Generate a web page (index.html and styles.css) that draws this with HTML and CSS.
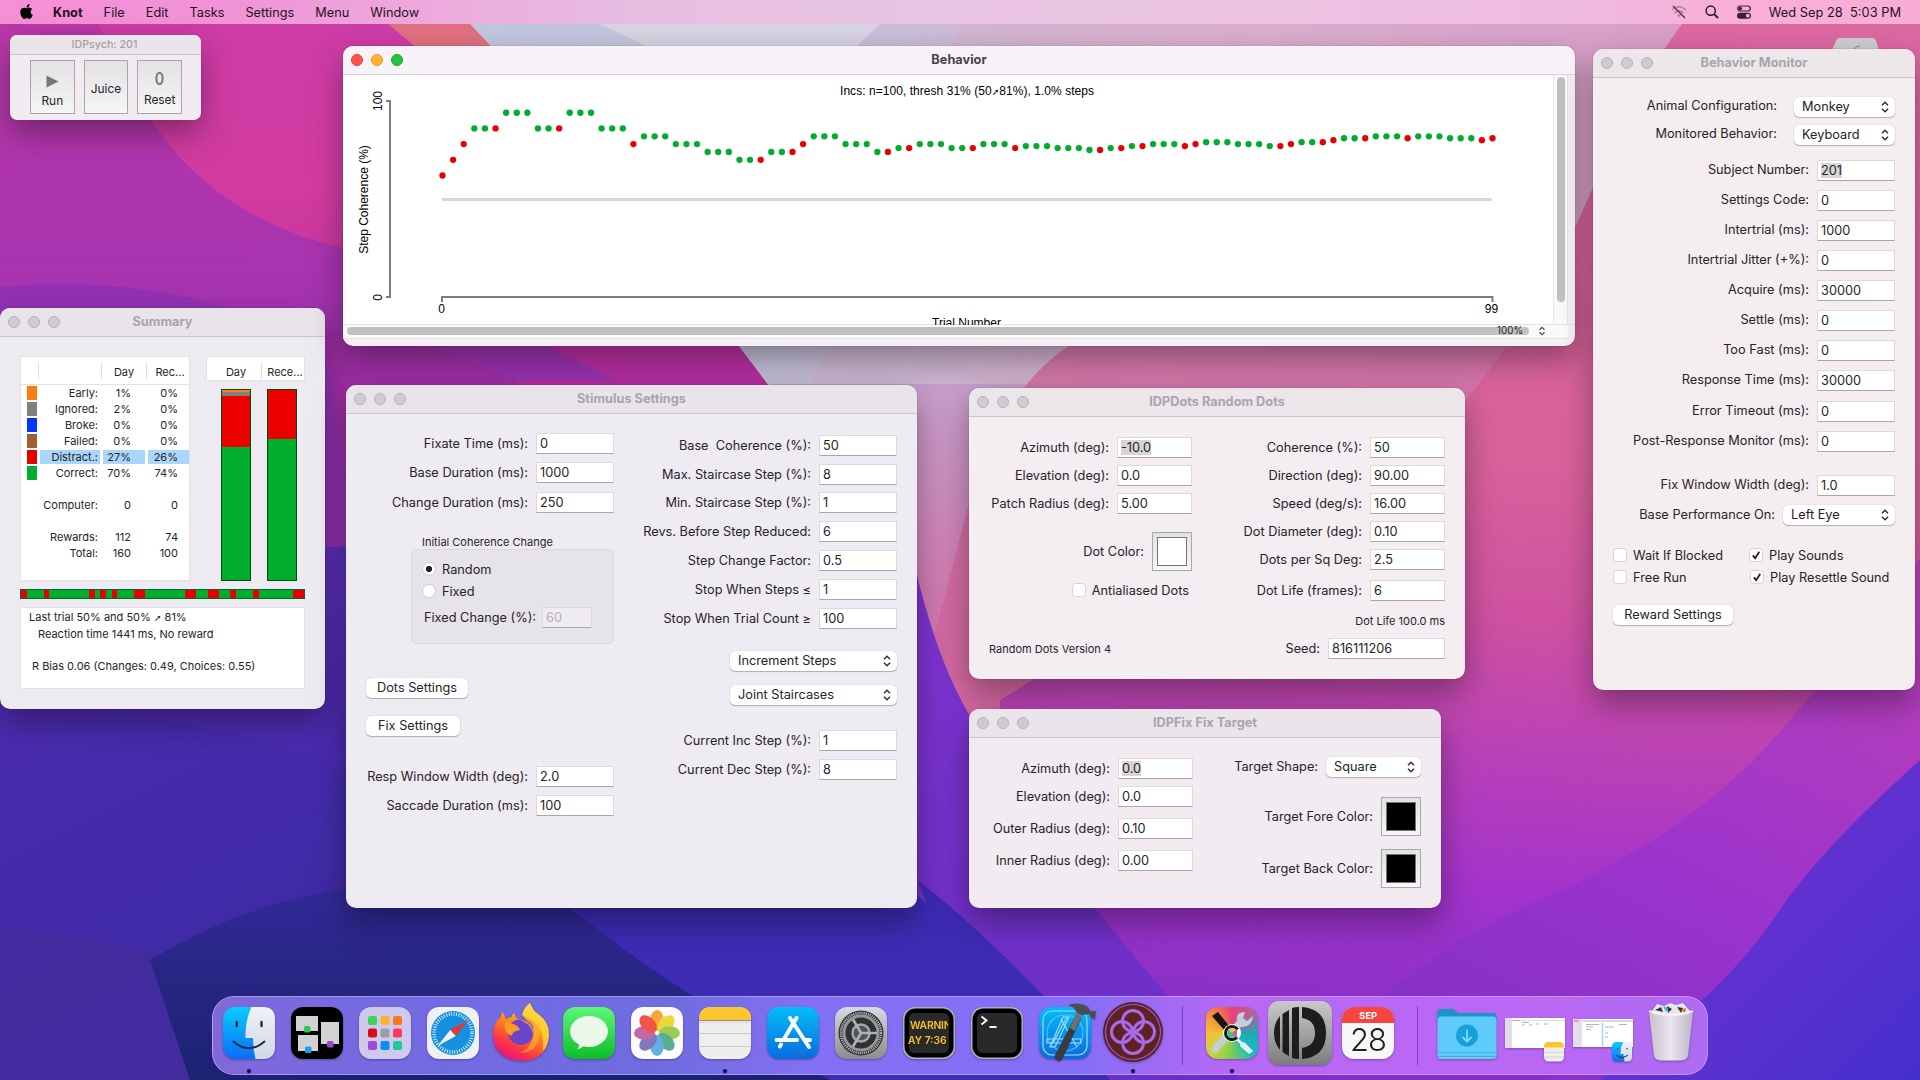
FILE: index.html
```html
<!DOCTYPE html>
<html lang="en">
<head>
<meta charset="utf-8">
<title>Knot</title>
<link rel="stylesheet" href="styles.css">
</head>
<body>
<svg class="wallpaper" viewBox="0 0 1920 1080" preserveAspectRatio="none" aria-hidden="true">
  <defs>
    <linearGradient id="w-base" x1="0" y1="0" x2="0" y2="1"><stop offset="0" stop-color="#bd38a8"/><stop offset=".28" stop-color="#a533b0"/><stop offset=".55" stop-color="#7a2fb4"/><stop offset="1" stop-color="#33288f"/></linearGradient>
    <linearGradient id="w-pink" x1="0" y1="0" x2="0" y2="1"><stop offset="0" stop-color="#cd3ca8"/><stop offset=".45" stop-color="#d23b9f"/><stop offset="1" stop-color="#b02ca4"/></linearGradient>
    <linearGradient id="w-lav" x1="0" y1="0" x2="1" y2="0"><stop offset="0" stop-color="#bfc7df"/><stop offset=".35" stop-color="#c9bdd8"/><stop offset=".6" stop-color="#dcb0cf"/><stop offset="1" stop-color="#d89cc8"/></linearGradient>
    <linearGradient id="w-rose" gradientUnits="userSpaceOnUse" x1="1500" y1="0" x2="1420" y2="1080"><stop offset="0" stop-color="#dc68a2"/><stop offset=".42" stop-color="#d8629a"/><stop offset=".56" stop-color="#d052a0"/><stop offset=".7" stop-color="#b840b8"/><stop offset=".82" stop-color="#a333cc"/><stop offset="1" stop-color="#7c2fc4"/></linearGradient>
    <linearGradient id="w-rosel" x1="0" y1="0" x2="0" y2="1"><stop offset="0" stop-color="#c8a0cc"/><stop offset=".5" stop-color="#d27cb2"/><stop offset="1" stop-color="#d8649f"/></linearGradient>
    <linearGradient id="w-blue" x1="0" y1="0" x2="0" y2="1"><stop offset="0" stop-color="#5f30bd"/><stop offset=".5" stop-color="#4429ac"/><stop offset="1" stop-color="#302890"/></linearGradient>
    <linearGradient id="w-deep" x1="0" y1="0" x2="1" y2="1"><stop offset="0" stop-color="#4a2cb0"/><stop offset="1" stop-color="#33289a"/></linearGradient>
    <linearGradient id="w-navy" x1="0" y1="0" x2="0" y2="1"><stop offset="0" stop-color="#322a9a"/><stop offset=".5" stop-color="#272683"/><stop offset="1" stop-color="#1c2272"/></linearGradient>
    <linearGradient id="w-vio" x1="0" y1="0" x2="0" y2="1"><stop offset="0" stop-color="#8034d2"/><stop offset="1" stop-color="#6a2fc6"/></linearGradient>
    <linearGradient id="w-right" x1="1" y1="0" x2="0" y2="1"><stop offset="0" stop-color="#b53dbd"/><stop offset=".5" stop-color="#9833ce"/><stop offset="1" stop-color="#7b2fc6"/></linearGradient>
    <linearGradient id="w-br" x1="0" y1="0" x2="1" y2="1"><stop offset="0" stop-color="#7c32d4"/><stop offset="1" stop-color="#4530cc"/></linearGradient>
  </defs>
  <rect width="1920" height="1080" fill="url(#w-base)"/>
  <path d="M98 24Q130 90 165 140Q230 222 343 248L700 420L1000 400V0H98Z" fill="url(#w-pink)"/>
  <path d="M0 287Q120 276 230 308Q300 335 346 400V560L0 540Z" fill="#9331b4"/>
  <path d="M325 330Q420 335 515 382L640 480H346Z" fill="#a02fa6"/>
  <path d="M515 380H770L800 500H560Z" fill="#b42f9d"/>
  <path d="M388 24H475L765 375L745 350Q600 200 388 24Z" fill="#e0707f"/>
  <path d="M470 24H1700V430H795L772 390Q600 160 470 24Z" fill="url(#w-lav)"/>
  <path d="M600 24L880 24Q820 80 800 120Z" fill="#d8d3e2"/>
  <path d="M960 24H1250L1100 420H795Z" fill="#dca9c6" opacity=".3"/>
  <path d="M770 384H1350L1300 800L1000 770L960 725Q860 620 770 384Z" fill="url(#w-rosel)"/>
  <path d="M1078 340Q1010 380 975 480L910 730L1000 780H1600V330Z" fill="#d4669f" opacity=".75"/>
  <path d="M1682 24Q1640 80 1600 170Q1540 320 1440 430L1000 700V1080H1920V0H1682Z" fill="url(#w-rose)"/>
  <path d="M0 560Q180 560 346 546L917 610V1080H0Z" fill="url(#w-blue)"/>
  <path d="M0 735Q150 690 346 770L560 908L700 1080H0Z" fill="url(#w-deep)"/>
  <path d="M0 928Q140 935 260 1000L330 1080H0Z" fill="#442c9c" opacity=".8"/>
  <path d="M150 960Q330 850 555 895Q650 960 830 1080H190Z" fill="url(#w-navy)"/>
  <path d="M555 895L917 890L1060 1080H830Q640 970 555 895Z" fill="#3d2bb4"/>
  <path d="M917 575Q945 690 990 745L1095 908Q1140 965 1240 1080H1040Q980 950 917 895Z" fill="url(#w-vio)"/>
  <path d="M917 880Q970 920 1044 996L1110 1080H1000Z" fill="#3d2bb4"/>
  <path d="M1920 558Q1860 640 1790 720Q1700 830 1540 900Q1400 960 1300 1080H1920Z" fill="url(#w-right)" opacity=".8"/>
  <path d="M1920 760Q1820 850 1780 910Q1720 1000 1600 1080H1920Z" fill="url(#w-br)"/>
  <path d="M1832 50l4-9q1-3 4-3h32q3 0 4 3l3 9z" fill="#cfcccf"/>
  <path d="M1854 50q1-4 6-4" fill="none" stroke="#8d8a8d"/>
</svg>

<nav class="menubar">
  <svg class="apple" viewBox="0 0 384 512"><path d="M318.7 268.7c-.2-36.7 16.4-64.4 50-84.8-18.8-26.9-47.2-41.7-84.7-44.6-35.5-2.8-74.3 20.7-88.5 20.7-15 0-49.4-19.7-76.4-19.7C63.3 141.2 4 184.8 4 273.5q0 39.3 14.4 81.2c12.8 36.7 59 126.7 107.2 125.2 25.2-.6 43-17.9 75.8-17.9 31.8 0 48.3 17.9 76.4 17.9 48.6-.7 90.4-82.5 102.6-119.3-65.2-30.7-61.7-90-61.7-91.9zm-56.6-164.2c27.3-32.4 24.8-61.9 24-72.5-24.1 1.4-52 16.4-67.9 34.9-17.5 19.8-27.8 44.3-25.6 71.9 26.1 2 49.9-11.4 69.5-34.3z"/></svg>
  <span class="menu app">Knot</span><span class="menu">File</span><span class="menu">Edit</span><span class="menu">Tasks</span><span class="menu">Settings</span><span class="menu">Menu</span><span class="menu">Window</span>
  <div class="status">
    <svg width="16" height="14" viewBox="0 0 16 14" fill="none"><g stroke="#b586a5" stroke-width="1.700"><path d="M1 5Q8-1.500 15 5M3.500 8Q8 4 12.500 8"/></g><path d="M8 12.500L5.800 10Q8 8.300 10.200 10Z" fill="#b586a5"/><path d="M2 1L14 13" stroke="#4b2b40" stroke-width="1.200"/></svg>
    <svg width="14" height="14" viewBox="0 0 14 14" fill="none" stroke="#2b1624" stroke-width="1.500"><circle cx="5.700" cy="5.700" r="4.600"/><path d="M9.200 9.200L13 13" stroke-width="1.900"/></svg>
    <svg width="14" height="14" viewBox="0 0 14 14"><rect x=".7" y="1" width="12.600" height="5" rx="2.500" fill="none" stroke="#3a2030" stroke-width="1.200"/><circle cx="3.300" cy="3.500" r="1.800" fill="#3a2030"/><rect x="0" y="7.700" width="14" height="6" rx="3" fill="#3a2030"/><circle cx="10.800" cy="10.700" r="1.900" fill="#f3aed6"/></svg>
    <span class="clock">Wed Sep 28&nbsp; 5:03 PM</span>
  </div>
</nav>

<section class="window psych">
  <header class="minibar">IDPsych: 201</header>
  <div class="tools">
    <div class="tool"><svg width="13" height="13" viewBox="0 0 13 13"><path d="M.5.5L12.500 6.500L.5 12.500Z" fill="#777"/></svg><span>Run</span></div>
    <div class="tool"><span>Juice</span></div>
    <div class="tool"><b>0</b><span>Reset</span></div>
  </div>
</section>

<section class="window summary">
  <header class="titlebar"><i></i><i></i><i></i><h1>Summary</h1></header>
  <div class="summary-body">
    <div class="tables">
      <div class="counts">
        <div class="crow chead"><span></span><span></span><span>Day</span><span>Rec...</span></div>
        <div class="crow"><em class="c-early"></em><span>Early:</span><span>1%</span><span>0%</span></div>
        <div class="crow"><em class="c-ignored"></em><span>Ignored:</span><span>2%</span><span>0%</span></div>
        <div class="crow"><em class="c-broke"></em><span>Broke:</span><span>0%</span><span>0%</span></div>
        <div class="crow"><em class="c-failed"></em><span>Failed:</span><span>0%</span><span>0%</span></div>
        <div class="crow hl"><em class="c-wrong"></em><span>Distract.:</span><span>27%</span><span>26%</span></div>
        <div class="crow"><em class="c-correct"></em><span>Correct:</span><span>70%</span><span>74%</span></div>
        <div class="crow"></div>
        <div class="crow"><em></em><span>Computer:</span><span>0</span><span>0</span></div>
        <div class="crow"></div>
        <div class="crow"><em></em><span>Rewards:</span><span>112</span><span>74</span></div>
        <div class="crow"><em></em><span>Total:</span><span>160</span><span>100</span></div>
      </div>
      <div class="bars">
        <div class="barhead"><span>Day</span><span>Rece...</span></div>
        <div class="barset">
          <div class="bar"><div class="c-early" style="height:1%"></div><div class="c-ignored" style="height:2%"></div><div class="c-wrong" style="height:27%"></div></div>
          <div class="bar"><div class="c-wrong" style="height:26%"></div></div>
        </div>
      </div>
    </div>
    <div class="strip" id="strip"></div>
    <div class="report"><p>Last trial 50% and 50% <small>➚</small> 81%</p><p class="in2">Reaction time 1441 ms, No reward</p><p>&nbsp;</p><p class="in1">R Bias 0.06 (Changes: 0.49, Choices: 0.55)</p></div>
  </div>
</section>

<section class="window behavior active">
  <header class="titlebar"><i></i><i></i><i></i><h1>Behavior</h1></header>
  <div class="plot-area">
    <svg class="plot" id="plot" width="1210" height="250" viewBox="343 75 1210 250">
      <g stroke="#7d7d7d" stroke-width="2" fill="none"><path d="M386 101H390V297H386"/><path d="M442 302V297H1492.500V302"/></g>
      <path d="M442 199.500H1491.500" stroke="#d6d6d6" stroke-width="3"/>
      <g class="plot-text">
        <text x="967" y="95" text-anchor="middle" textLength="254">Incs: n=100, thresh 31% (50<tspan class="dingbat">➚</tspan>81%), 1.0% steps</text>
        <text x="441.500" y="313" text-anchor="middle">0</text>
        <text x="1491.500" y="313" text-anchor="middle">99</text>
        <text x="966.500" y="327" text-anchor="middle">Trial Number</text>
        <text transform="translate(368 199.500) rotate(-90)" text-anchor="middle">Step Coherence (%)</text>
        <text transform="translate(382 101) rotate(-90)" text-anchor="middle">100</text>
        <text transform="translate(382 297.500) rotate(-90)" text-anchor="middle">0</text>
      </g>
    </svg>
    <div class="vscroll"><div class="vthumb"></div></div>
  </div>
  <div class="hscroll"><div class="hthumb">100%</div><svg width="8" height="10" viewBox="0 0 8 10" fill="none" stroke="#444" stroke-width="1.200"><path d="M1.500 3.800L4 1.300L6.500 3.800M1.500 6.200L4 8.700L6.500 6.200"/></svg></div>
</section>

<section class="window stimulus">
  <header class="titlebar"><i></i><i></i><i></i><h1>Stimulus Settings</h1></header>
  <div class="columns">
    <div class="col stim-left">
      <div class="row">Fixate Time (ms):<div class="input">0</div></div>
      <div class="row mt8">Base Duration (ms):<div class="input">1000</div></div>
      <div class="row mt9">Change Duration (ms):<div class="input">250</div></div>
      <div class="grouplabel">Initial Coherence Change</div>
      <div class="group">
        <div class="radio on"><i></i>Random</div>
        <div class="radio"><i></i>Fixed</div>
        <div class="grow">Fixed Change (%):<div class="input off">60</div></div>
      </div>
      <div class="button dots">Dots Settings</div>
      <div class="button fix">Fix Settings</div>
      <div class="row mt29">Resp Window Width (deg):<div class="input">2.0</div></div>
      <div class="row mt8">Saccade Duration (ms):<div class="input">100</div></div>
    </div>
    <div class="col stim-right">
      <div class="row">Base&nbsp; Coherence (%):<div class="input">50</div></div>
      <div class="row mt8">Max. Staircase Step (%):<div class="input">8</div></div>
      <div class="row mt7">Min. Staircase Step (%):<div class="input">1</div></div>
      <div class="row mt8">Revs. Before Step Reduced:<div class="input">6</div></div>
      <div class="row mt8">Step Change Factor:<div class="input">0.5</div></div>
      <div class="row mt8">Stop When Steps ≤<div class="input">1</div></div>
      <div class="row mt8">Stop When Trial Count ≥<div class="input">100</div></div>
      <div class="popup wide mt22">Increment Steps<svg viewBox="0 0 8 12"><path d="M1 4.200L4 1.200L7 4.200M1 7.800L4 10.800L7 7.800"/></svg></div>
      <div class="popup wide mt13">Joint Staircases<svg viewBox="0 0 8 12"><path d="M1 4.200L4 1.200L7 4.200M1 7.800L4 10.800L7 7.800"/></svg></div>
      <div class="row mt24">Current Inc Step (%):<div class="input">1</div></div>
      <div class="row mt8">Current Dec Step (%):<div class="input">8</div></div>
    </div>
  </div>
</section>

<section class="window dotswin">
  <header class="titlebar"><i></i><i></i><i></i><h1>IDPDots Random Dots</h1></header>
  <div class="columns">
    <div class="col dots-left">
      <div class="row">Azimuth (deg):<div class="input"><mark>-10.0</mark></div></div>
      <div class="row mt7">Elevation (deg):<div class="input">0.0</div></div>
      <div class="row mt7">Patch Radius (deg):<div class="input">5.00</div></div>
      <div class="row wellrow mt18">Dot Color:<div class="well"><div></div></div></div>
      <div class="check anti"><i></i>Antialiased Dots</div>
      <div class="version">Random Dots Version 4</div>
    </div>
    <div class="col dots-right">
      <div class="row">Coherence (%):<div class="input">50</div></div>
      <div class="row mt7">Direction (deg):<div class="input">90.00</div></div>
      <div class="row mt7">Speed (deg/s):<div class="input">16.00</div></div>
      <div class="row mt7">Dot Diameter (deg):<div class="input">0.10</div></div>
      <div class="row mt7">Dots per Sq Deg:<div class="input">2.5</div></div>
      <div class="row mt10">Dot Life (frames):<div class="input">6</div></div>
      <div class="life">Dot Life 100.0 ms</div>
      <div class="row seed">Seed:<div class="input">816111206</div></div>
    </div>
  </div>
</section>

<section class="window fixwin">
  <header class="titlebar"><i></i><i></i><i></i><h1>IDPFix Fix Target</h1></header>
  <div class="columns">
    <div class="col fix-left">
      <div class="row">Azimuth (deg):<div class="input"><mark>0.0</mark></div></div>
      <div class="row mt7">Elevation (deg):<div class="input">0.0</div></div>
      <div class="row mt11">Outer Radius (deg):<div class="input">0.10</div></div>
      <div class="row mt11">Inner Radius (deg):<div class="input">0.00</div></div>
    </div>
    <div class="col fix-right">
      <div class="row">Target Shape:<div class="popup shape">Square<svg viewBox="0 0 8 12"><path d="M1 4.200L4 1.200L7 4.200M1 7.800L4 10.800L7 7.800"/></svg></div></div>
      <div class="row wellrow mt20">Target Fore Color:<div class="well black"><div></div></div></div>
      <div class="row wellrow mt13">Target Back Color:<div class="well black"><div></div></div></div>
    </div>
  </div>
</section>

<section class="window monitor">
  <header class="titlebar"><i></i><i></i><i></i><h1>Behavior Monitor</h1></header>
  <div class="monitor-body">
    <div class="row wgap"><span>Animal Configuration:</span><div class="popup mk">Monkey<svg viewBox="0 0 8 12"><path d="M1 4.200L4 1.200L7 4.200M1 7.800L4 10.800L7 7.800"/></svg></div></div>
    <div class="row wgap mt7"><span>Monitored Behavior:</span><div class="popup mk">Keyboard<svg viewBox="0 0 8 12"><path d="M1 4.200L4 1.200L7 4.200M1 7.800L4 10.800L7 7.800"/></svg></div></div>
    <div class="row mt15"><span>Subject Number:</span><div class="input"><mark>201</mark></div></div>
    <div class="row mt9"><span>Settings Code:</span><div class="input">0</div></div>
    <div class="row mt9"><span>Intertrial (ms):</span><div class="input">1000</div></div>
    <div class="row mt9"><span>Intertrial Jitter (+%):</span><div class="input">0</div></div>
    <div class="row mt9"><span>Acquire (ms):</span><div class="input">30000</div></div>
    <div class="row mt9"><span>Settle (ms):</span><div class="input">0</div></div>
    <div class="row mt9"><span>Too Fast (ms):</span><div class="input">0</div></div>
    <div class="row mt9"><span>Response Time (ms):</span><div class="input">30000</div></div>
    <div class="row mt10"><span>Error Timeout (ms):</span><div class="input">0</div></div>
    <div class="row mt9"><span>Post-Response Monitor (ms):</span><div class="input">0</div></div>
    <div class="row mt23"><span>Fix Window Width (deg):</span><div class="input">1.0</div></div>
    <div class="row base mt8">Base Performance On:<div class="popup eye">Left Eye<svg viewBox="0 0 8 12"><path d="M1 4.200L4 1.200L7 4.200M1 7.800L4 10.800L7 7.800"/></svg></div></div>
    <div class="checks">
      <div class="check"><i></i>Wait If Blocked</div>
      <div class="check"><i><svg viewBox="0 0 14 14"><path d="M3.300 7.500L6 10.700L10.800 3.200"/></svg></i>Play Sounds</div>
      <div class="check"><i></i>Free Run</div>
      <div class="check shift"><i><svg viewBox="0 0 14 14"><path d="M3.300 7.500L6 10.700L10.800 3.200"/></svg></i>Play Resettle Sound</div>
    </div>
    <div class="button reward">Reward Settings</div>
  </div>
</section>

<footer class="dock">
  <div class="icon running"><svg viewBox="0 0 52 52">
    <defs><linearGradient id="fb" x1="0" y1="0" x2="0" y2="1"><stop offset="0" stop-color="#09cdff"/><stop offset="1" stop-color="#0a6df5"/></linearGradient><linearGradient id="fw" x1="0" y1="0" x2="0" y2="1"><stop offset="0" stop-color="#f2f2f4"/><stop offset="1" stop-color="#cdd9e6"/></linearGradient></defs>
    <rect width="52" height="52" rx="12" fill="url(#fb)"/><path d="M28.500 0H40Q52 0 52 12V40Q52 52 40 52H32.500Q30 42 30 31H22.500Q22 14 28.500 0Z" fill="url(#fw)"/><path d="M13.800 15v4M38.500 15v4" stroke="#1b2b3d" stroke-width="2.400" stroke-linecap="round"/><path d="M10.500 34.500Q26 48 41.500 34.500" fill="none" stroke="#1b2b3d" stroke-width="1.800" stroke-linecap="round"/></svg></div>
  <div class="icon"><svg viewBox="0 0 52 52"><rect width="52" height="52" rx="12" fill="#000"/><path d="M5 9h22v15H5zM30 15h18v22H30zM7 28h20v16H7z" fill="#d2d2d2"/><rect x="13" y="19" width="6.500" height="6.500" rx="1.500" fill="#34c94c"/><rect x="36" y="34" width="6.500" height="6.500" rx="1.500" fill="#9747d0"/><rect x="14" y="39.500" width="6.500" height="6.500" rx="1.500" fill="#16a2e8"/></svg></div>
  <div class="icon"><svg viewBox="0 0 52 52"><rect width="52" height="52" rx="12" fill="#cfc9ee"/><g><rect x="9" y="9" width="9" height="9" rx="2" fill="#3fd455"/><rect x="21.500" y="9" width="9" height="9" rx="2" fill="#fdb22b"/><rect x="34" y="9" width="9" height="9" rx="2" fill="#f8791d"/><rect x="9" y="21.500" width="9" height="9" rx="2" fill="#d90b1c"/><rect x="21.500" y="21.500" width="9" height="9" rx="2" fill="#9a9fa6"/><rect x="34" y="21.500" width="9" height="9" rx="2" fill="#fc3a5b"/><rect x="9" y="34" width="9" height="9" rx="2" fill="#a14bd2"/><rect x="21.500" y="34" width="9" height="9" rx="2" fill="#0a8ff5"/><rect x="34" y="34" width="9" height="9" rx="2" fill="#23c99a"/></g></svg></div>
  <div class="icon"><svg viewBox="0 0 52 52"><rect width="52" height="52" rx="12" fill="#f0f0f2"/><circle cx="26" cy="26" r="22" fill="#1590e0"/><circle cx="26" cy="26" r="19" fill="none" stroke="#e6f4ff" stroke-width="3.600" stroke-dasharray=".9 1.590"/><path d="M41.500 13L28.800 29L23.200 23Z" fill="#e8352e"/><path d="M10.500 39L23.200 23L28.800 29Z" fill="#f4f4f4"/></svg></div>
  <div class="icon"><svg viewBox="0 0 52 52"><defs><linearGradient id="ff" x1=".8" y1="0" x2=".3" y2="1"><stop offset="0" stop-color="#ffdf3d"/><stop offset=".45" stop-color="#ff8a1c"/><stop offset=".8" stop-color="#fb2f4b"/><stop offset="1" stop-color="#e21587"/></linearGradient></defs><path d="M7 5Q10 7 10.500 12L17 9.500Q17 5 20 7Q20 11 24 12L32 14L27 8Q30-1 35-4Q37 3 44 8Q54 15 54 28Q53 53 26 54Q-2 52-2 27Q-2 16 5 11Z" fill="url(#ff)"/><circle cx="26" cy="25" r="13" fill="#6b45c9"/><path d="M10 15Q8 26 17 29Q17 24 25 23Q24 17 10 15Z" fill="#ff9a26"/><path d="M22 12Q35 12 38 22Q41 16 36 10Q44 14 45 26Q44 45 25 46Q38 40 38 27Q36 16 22 12Z" fill="#ffb52e" opacity=".6"/><path d="M35-4Q37 3 44 8Q54 15 54 28Q53 38 48 44Q50 22 38 14Q30 8 27 8Q30-1 35-4Z" fill="#ffdc3a" opacity=".75"/></svg></div>
  <div class="icon"><svg viewBox="0 0 52 52"><defs><linearGradient id="ms" x1="0" y1="0" x2="0" y2="1"><stop offset="0" stop-color="#5df777"/><stop offset="1" stop-color="#0dbd2a"/></linearGradient></defs><rect width="52" height="52" rx="12" fill="url(#ms)"/><path d="M26 9c10.500 0 19 6.800 19 15.300S36.500 40 26 40q-3 0-5.700-.7Q17.500 42 14 42.500Q16.500 40 16 37.500Q7 33 7 24.300C7 15.800 15.500 9 26 9Z" fill="#e9f8e8"/></svg></div>
  <div class="icon"><svg viewBox="0 0 52 52"><rect width="52" height="52" rx="12" fill="#fbfbfb"/><g opacity=".88"><ellipse cx="26" cy="13.500" rx="6.800" ry="10.500" fill="#fb9a1e"/><ellipse cx="26" cy="13.500" rx="6.800" ry="10.500" fill="#e8d41d" transform="rotate(45 26 26)"/><ellipse cx="26" cy="13.500" rx="6.800" ry="10.500" fill="#90c53c" transform="rotate(90 26 26)"/><ellipse cx="26" cy="13.500" rx="6.800" ry="10.500" fill="#43a57e" transform="rotate(135 26 26)"/><ellipse cx="26" cy="13.500" rx="6.800" ry="10.500" fill="#4ea7dd" transform="rotate(180 26 26)"/><ellipse cx="26" cy="13.500" rx="6.800" ry="10.500" fill="#7268b4" transform="rotate(225 26 26)"/><ellipse cx="26" cy="13.500" rx="6.800" ry="10.500" fill="#b9569d" transform="rotate(270 26 26)"/><ellipse cx="26" cy="13.500" rx="6.800" ry="10.500" fill="#f33e30" transform="rotate(315 26 26)"/></g><circle cx="26" cy="26" r="1.500" fill="#fff" opacity=".8"/></svg></div>
  <div class="icon running"><svg viewBox="0 0 52 52"><rect width="52" height="52" rx="12" fill="#f0eeec"/><path d="M0 13.500V12Q0 0 12 0H40Q52 0 52 12V13.500Z" fill="#fec62e"/><path d="M0 13.500H52" stroke="#8e8a86"/><path d="M1 15.500H51" stroke="#b9b5b0" stroke-dasharray="1 1.500"/><path d="M0 26.500H52M0 39.500H52" stroke="#cdc9c6"/></svg></div>
  <div class="icon"><svg viewBox="0 0 52 52"><defs><linearGradient id="as" x1="0" y1="0" x2="0" y2="1"><stop offset="0" stop-color="#04bdf8"/><stop offset="1" stop-color="#0a6be0"/></linearGradient></defs><rect width="52" height="52" rx="12" fill="url(#as)"/><path d="M29.500 11L17 32M23 11L42 40M14 37.500L12.800 39.500M9.500 33H30M38 33H43" stroke="#f5fbff" stroke-width="4" stroke-linecap="round" fill="none"/></svg></div>
  <div class="icon"><svg viewBox="0 0 52 52"><defs><linearGradient id="sp" x1="0" y1="0" x2="0" y2="1"><stop offset="0" stop-color="#d3dbe2"/><stop offset="1" stop-color="#8e8c8b"/></linearGradient></defs><rect width="52" height="52" rx="12" fill="url(#sp)"/><circle cx="26" cy="26" r="22.500" fill="#2f3133"/><circle cx="26" cy="26" r="20" fill="none" stroke="#bcbec0" stroke-width="2.500" stroke-dasharray="1.100 .994"/><circle cx="26" cy="26" r="17" fill="none" stroke="#94979a" stroke-width="3"/><circle cx="26" cy="26" r="8.500" fill="#505357" stroke="#a4a7aa" stroke-width="2.500"/><path d="M26 26H42M26 26L18 12.500M26 26L18 39.500" stroke="#b0b3b6" stroke-width="2.600"/></svg></div>
  <div class="icon"><svg viewBox="0 0 52 52"><rect width="52" height="52" rx="12" fill="#a9b3b8"/><rect x="1.500" y="1.500" width="49" height="49" rx="11" fill="#000"/><rect x="6" y="6" width="40" height="40" rx="5" fill="#292929"/></svg><div class="ticker"><span>WARNIN</span><span>AY 7:36</span></div></div>
  <div class="icon"><svg viewBox="0 0 52 52"><rect width="52" height="52" rx="12" fill="#a9b3b8"/><rect x="1.500" y="1.500" width="49" height="49" rx="11" fill="#000"/><rect x="6" y="6" width="40" height="40" rx="5" fill="#292929"/><path d="M10.500 9.500L15.500 13.500L10.500 17.500M18.500 20H25.500" stroke="#fff" stroke-width="1.900" fill="none"/></svg></div>
  <div class="icon"><svg viewBox="0 0 52 52"><rect width="52" height="52" rx="12" fill="url(#as)"/><g fill="none" stroke="#9edbfb" stroke-width="1.200"><rect x="4" y="4" width="44" height="44" rx="9"/><circle cx="26" cy="26" r="18" opacity=".5"/><path d="M28 10L14 36M22 12L38 40M8 32H42V36H8ZM24 10h6L16 40h-5Z"/></g><path d="M36 10L42 12L24 51Q22 56 17 53Q15 51 16 48Z" fill="#393b40"/><path d="M38 5L43 8L36 24L31 21Z" fill="#6e7278"/><path d="M29-2Q40-6 49 0L51 4L57 4L56 12L52 11L50 7Q44 8 43 8L37 5Q36 0 29-2Z" fill="#4b4e54"/></svg></div>
  <div class="icon running"><svg viewBox="0 0 52 52"><circle cx="26" cy="25" r="30" fill="#5f2220"/><circle cx="26" cy="25" r="27.500" fill="none" stroke="#8d5adf" stroke-width="1.200"/><g fill="none" stroke="#a66bea" stroke-width="3"><circle cx="26" cy="14" r="10.500"/><circle cx="26" cy="36" r="10.500"/><circle cx="15" cy="25" r="10.500"/><circle cx="37" cy="25" r="10.500"/></g></svg></div>
  <div class="sep"></div>
  <div class="icon running"><div class="rainbow"></div><svg viewBox="0 0 52 52"><path d="M6 9L12 5L24 20L19 24Z" fill="#17171a"/><path d="M39 5Q29 5 31 14L7 38Q4 42 7 45Q11 47 13 43L35 20Q46 20 47 9L41 14L37 11Z" fill="#c3ced7"/><path d="M29 29L36 36L38 36L46 44L43 46L35 39L35 37L28 30Z" fill="#e9edf0" stroke="#e9edf0" stroke-width="1.500"/><circle cx="26" cy="26" r="9" fill="#fff"/><circle cx="26" cy="26" r="6.500" fill="none" stroke="#18181a" stroke-width="3" stroke-dasharray="32 9" transform="rotate(40 26 26)"/><circle cx="26" cy="26" r="4.800" fill="#35c0a5"/><path d="M26 26L31 22V30Z" fill="#f24a91"/><path d="M26 26L22 22.500Q26 20 30 22.500Z" fill="#f6c42e"/></svg></div>
  <div class="icon"><svg class="big" viewBox="0 0 64 64"><defs><linearGradient id="dd" x1="0" y1="0" x2="0" y2="1"><stop offset="0" stop-color="#c9c9c9"/><stop offset="1" stop-color="#7d7d7d"/></linearGradient></defs><rect width="64" height="64" rx="11" fill="url(#dd)"/><path d="M6 32Q6 22 12 15V49Q6 42 6 32ZM14.500 13L21 9V55Q17 53 14.500 51ZM24 7Q27 6 31 6V58Q27 58 24 57Z" fill="#1d1d1d"/><path d="M34 6Q58 8 58 32T34 58V47Q47 45 47 32T34 17Z" fill="#1d1d1d"/></svg></div>
  <div class="icon calendar"><div class="month">SEP</div><div class="day">28</div></div>
  <div class="sep"></div>
  <div class="icon"><svg viewBox="0 0 52 52"><path d="M-3.500 5Q-3.500 2 0 2H12L17 6H52Q55.500 6 55.500 10V20H-3.500Z" fill="#1a94c9"/><rect x="-3.500" y="9.500" width="59" height="42.500" rx="3.500" fill="#5fcbfa"/><path d="M-3.500 45.500H55.500M-3.500 49.500H55.500" stroke="#37a6dc" stroke-width=".8"/><circle cx="26" cy="28.500" r="11" fill="#199fd9"/><path d="M26 22.500V34M21.500 30L26 34.500L30.500 30" stroke="#7ddafd" stroke-width="1.800" fill="none"/></svg></div>
  <div class="icon"><svg viewBox="0 0 52 52"><rect x="-4" y="11" width="60" height="30" fill="#fff"/><rect x="-4" y="11" width="7" height="30" fill="#e2dbe8"/><path d="M3 13.500H56" stroke="#dfdbe3"/><path d="M4 13.500h7M13 15.500h7M13 18h3M20 18h3M27 17h3M35 17h4" stroke="#b3b0b7"/><rect x="35" y="35" width="20" height="19.500" rx="4.500" fill="#efedea"/><path d="M35 40.500V39.500Q35 35 39.500 35H50.500Q55 35 55 39.500V40.500Z" fill="#fec62e"/><path d="M35 45.500H55M35 50H55" stroke="#d0ccc8" stroke-width=".7"/></svg></div>
  <div class="icon"><svg viewBox="0 0 52 52"><rect x="-4" y="12" width="60" height="28" fill="#fff"/><rect x="-4" y="12" width="9" height="28" fill="#e3dfea"/><path d="M5 14H56" stroke="#dcd8e1" stroke-width="2"/><path d="M-3 14h5" stroke="#e55" stroke-width="1"/><path d="M9 17.500h13M9 20h7M9 22.500h5M28 20h9M42 17.500h8M28 26h3M28 30h3" stroke="#b5b3bc"/><path d="M25.500 16V39" stroke="#a5d0ef" stroke-width="1.500"/><rect x="35" y="35" width="20" height="19.500" rx="4.500" fill="url(#fb)"/><path d="M46 35H50.500Q55 35 55 39.500V50Q55 54.500 50.500 54.500H47.500Q46.500 50 46.500 47H43.500Q43.500 40 46 35Z" fill="url(#fw)"/><path d="M40.500 41v1.500M50 41v1.500M39 48Q45 53 51 48" stroke="#1b2b3d" fill="none"/></svg></div>
  <div class="icon"><svg viewBox="0 0 52 52"><defs><linearGradient id="tr" x1="0" y1="0" x2="1" y2="0"><stop offset="0" stop-color="#c9c7cd"/><stop offset=".5" stop-color="#efedf0"/><stop offset="1" stop-color="#bdbbc4"/></linearGradient></defs><path d="M7 4L12-3L19-1L25-4L31-2L38-4L45 4L44 9H8Z" fill="#e8e8ec"/><path d="M10 3l6-3 2 5zM22-1l5 3-4 4zM32 0l6 1-2 5z" fill="#35333c"/><path d="M18-1l5 2-2 4z" fill="#39b5e0"/><path d="M36 3l5-2-1 5z" fill="#d8722c"/><path d="M4 5Q26 12 48 5L43 49Q42 53 36 53.500H16Q10 53 9 49Z" fill="url(#tr)" opacity=".95"/><path d="M4 4Q26 12 48 4" stroke="#fafafa" fill="none" stroke-width="1.500"/></svg></div>
</footer>
<script src="script.js"></script>
</body>
</html>
```
FILE: script.js
```js
// Staircase record: each token is outcome (G correct, R wrong), level, optional repeat count.
const record = 'R62 R70 R78 G86x2 R86 G94x3 G86x2 R86 G94x3 G86x3 R78 G82x3 G78x3 G74x3 G70x2 R70 G74x2 R74 R78 G82x3 G78x3 G74 R74 G76 R76 G78x3 G76x2 R76 G78x3 R76 G77x3 G76x3 G75 R75 G76 R76 G77 R77 G78x3 R77 R78 G79x3 G78x3 G77 R77 R78 G79x2 R79 R80 G81x2 R81 G82x3 R81 G82x3 G81x3 R80 R81';
const plot = document.getElementById('plot');
let trial = 0;
record.split(' ').forEach(token => {
  const [, outcome, level, count] = token.match(/([RG])(\d+)(?:x(\d+))?/);
  for (let i = 0; i < (+count || 1); i++, trial++) {
    const dot = document.createElementNS('http://www.w3.org/2000/svg', 'circle');
    dot.setAttribute('cx', 442.5 + trial * 10.606);
    dot.setAttribute('cy', 297 - level * 1.96);
    dot.setAttribute('r', 3.15);
    dot.setAttribute('fill', outcome === 'R' ? '#eb0000' : '#00ad2f');
    plot.appendChild(dot);
  }
});

// The last fifty trials, oldest at the left.
const wrong = new Set([0, 4, 12, 14, 16, 20, 21, 29, 30, 33, 34, 37, 41, 48, 49]);
const strip = document.getElementById('strip');
for (let i = 0; i < 50; i++) {
  const cell = document.createElement('div');
  cell.className = wrong.has(i) ? 'c-wrong' : 'c-correct';
  strip.appendChild(cell);
}
```
FILE: styles.css
```css
* { box-sizing: border-box; }
body {
  margin: 0; width: 1920px; height: 1080px; overflow: hidden; position: relative;
  font-family: Inter, "Liberation Sans", sans-serif; font-size: 12.75px; color: #262427;
}
i, em { font-style: normal; }
.wallpaper { position: absolute; inset: 0; width: 1920px; height: 1080px; }

/* menu bar */
.menubar {
  position: relative; height: 24px; display: flex; align-items: center; padding: 0 19px 0 20px;
  background: linear-gradient(90deg, #f68fd5 0, #f093d6 12%, #eda9dc 22%, #e6bfe2 34%, #ebc6e2 60%, #efbbe0 82%, #f8aed7 90%, #f8add6 100%);
  color: #27121f; white-space: pre;
}
.apple { width: 13px; height: 17px; margin-right: 20px; margin-top: -2px; }
.menu { margin-right: 21px; }
.app { font-weight: 700; }
.status { margin-left: auto; display: flex; align-items: center; gap: 18px; }
.clock { font-size: 12.85px; }

/* windows */
.window {
  position: absolute; border-radius: 10px; background: #f0ebf2; overflow: hidden;
  box-shadow: 0 0 1px rgba(0,0,0,.5), 0 14px 32px rgba(0,0,0,.36);
}
.titlebar {
  height: 29px; background: #e8e4ea; border-bottom: 1px solid #cbc7cd;
  display: flex; align-items: center; gap: 8px; padding-left: 8px; color: #a9a5ab;
}
.titlebar i { width: 12px; height: 12px; border-radius: 50%; background: #cfcbd1; border: 1px solid #b7b3b9; }
.titlebar h1 { flex: 1; margin: -1px 68px 0 0; font-size: 12.75px; font-weight: 700; text-align: center; }
.active .titlebar { background: #f8f3f8; color: #474448; border-bottom-color: #d8d3d8; }
.active .titlebar i:nth-child(1) { background: #ff544d; border-color: #e2413b; }
.active .titlebar i:nth-child(2) { background: #ffb32e; border-color: #e09b27; }
.active .titlebar i:nth-child(3) { background: #26c13f; border-color: #1ba432; }

.psych { left: 10px; top: 35px; width: 191px; height: 85px; border-radius: 7px; background: #f2ebf1; }
.minibar { height: 20px; line-height: 19px; text-align: center; font-size: 10.7px; font-weight: 500; color: #a39ea4; background: #ebe4ea; border-bottom: 1px solid #c9c2c8; padding-right: 2px; }
.tools { display: flex; gap: 9px; padding: 5px 19px 0 20px; }
.tool {
  width: 45px; height: 54px; border: 1px solid #a9a5a8; background: linear-gradient(#e3e1e3, #f6f5f6);
  display: flex; flex-direction: column; align-items: center; justify-content: center; gap: 4px; font-size: 11.9px;
}
.tool:first-child { padding-top: 8px; gap: 5px; }
.tool:last-child { padding-top: 4px; }
.tool:nth-child(2) { padding-top: 2px; }
.tool b { font-size: 17px; line-height: 17px; font-weight: 600; color: #777; transform: scaleX(.85); }

.summary { left: 0; top: 308px; width: 325px; height: 401px; background: #eeeaf1; }
.summary-body { padding: 19px 20px; font-size: 11px; }
.tables { display: flex; gap: 16px; height: 225px; }
.counts { width: 170px; background: #fff; border: 1px solid #e3e1e4; }
.crow { display: grid; grid-template-columns: 17px 2px 60px 3px 42px 3px 41px; height: 16px; line-height: 15px; text-align: right; }
.crow > :nth-child(1) { grid-column: 1; margin-left: 6px; width: 10px; height: 14px; }
.crow > :nth-child(2) { grid-column: 3; padding-right: 2px; height: 14px; }
.crow > :nth-child(3) { grid-column: 5; padding-right: 14px; height: 14px; }
.crow > :nth-child(4) { grid-column: 7; padding-right: 11px; height: 14px; }
.crow.hl > span { background: #a9d6fc; }
.chead { height: 28px; border-bottom: 1px solid #e3e1e4; margin-bottom: 1px; padding-top: 6px; line-height: 18px; grid-template-columns: 18px 63px 45px 43px; text-align: center; }
.chead > span:nth-child(n) { height: 16px; width: auto; margin: 0; padding: 0; border-right: 1px solid #dedcdf; }
.chead > span:nth-child(1) { grid-column: 1; } .chead > span:nth-child(2) { grid-column: 2; }
.chead > span:nth-child(3) { grid-column: 3; } .chead > span:nth-child(4) { grid-column: 4; border: 0; padding-left: 3px; }
.c-early { background: #ff7b0f; } .c-ignored { background: #7f7f7f; } .c-broke { background: #0036ff; }
.c-failed { background: #9c6136; } .c-wrong { background: #eb0000; } .c-correct { background: #00ad2f; }
.bars { width: 99px; }
.barhead { height: 25px; background: #fff; border: 1px solid #e3e1e4; padding-top: 6px; display: flex; line-height: 18px; }
.barhead span { width: 54px; height: 16px; text-align: center; padding-left: 4px; }
.barhead span + span { width: 43px; border-left: 1px solid #dedcdf; }
.barset { display: flex; gap: 16px; padding: 8px 0 0 15px; }
.bar { width: 30px; height: 192px; border: 1px solid rgba(0,60,10,.85); background: #00ad2f; }
.strip { margin-top: 8px; height: 10px; border: 1px solid #063; display: flex; }
.strip div { flex: 1; }
.report { margin-top: 8px; height: 82px; background: #fff; border: 1px solid #e3e1e4; padding: 1px 8px; }
.report p { margin: 0; line-height: 16px; white-space: pre; }
.report small, .dingbat { font-family: "DejaVu Sans"; font-size: 9px; font-weight: 700; }
.in1 { padding-left: 3px; } .in2 { padding-left: 9px; }

.behavior { left: 343px; top: 46px; width: 1232px; height: 300px; background: #f4eff4; }
.plot-area { display: flex; height: 250px; background: #fff; border-bottom: 1px solid #e4e2e4; }
.plot { display: block; }
.plot-text { font: 12px "Liberation Sans", Arial, sans-serif; }
.vscroll { width: 15px; background: #fafafa; border-left: 1px solid #e6e4e6; border-right: 1px solid #e6e4e6; padding: 2px 3px; }
.vthumb { width: 8px; height: 225px; border-radius: 4px; background: #c1c1c1; }
.plot-area::after { content: ""; width: 7px; background: #f4eff4; }
.hscroll { width: 1225px; height: 14px; background: #fafafa; border-bottom: 1px solid #e4e2e4; display: flex; align-items: center; padding: 0 0 1px 4px; gap: 9px; }
.hthumb { width: 1182px; height: 8px; border-radius: 4px; background: #c1c1c1; font-size: 9.800px; line-height: 8px; text-align: right; padding-right: 6px; }

/* form controls */
.columns { display: flex; }
.col { display: flex; flex-direction: column; align-items: flex-end; }
.row { display: flex; align-items: center; justify-content: flex-end; gap: 8px; height: 21px; white-space: nowrap; }
.input { width: 78px; height: 21px; line-height: 20px; padding-left: 3px; background: #fff; border: 1px solid #dcd8de; border-bottom-color: #aaa6ac; }
mark { background: #d6d6d6; color: inherit; }
.popup, .button { height: 20px; line-height: 20px; border-radius: 5px; background: #fff; box-shadow: 0 0 1px rgba(0,0,0,.3), 0 1px 1px rgba(0,0,0,.25); }
.popup { display: flex; align-items: center; justify-content: space-between; padding: 0 6px 0 8px; }
.popup svg { width: 8px; height: 12px; fill: none; stroke: #333; stroke-width: 1.5; }
.popup.wide { width: 167px; flex: none; margin-bottom: 1px; }
.button { text-align: center; }
.mt7 { margin-top: 7px; } .mt8 { margin-top: 8px; } .mt9 { margin-top: 9px; } .mt10 { margin-top: 10px; }
.mt11 { margin-top: 11px; } .mt13 { margin-top: 13px; } .mt15 { margin-top: 15px; } .mt18 { margin-top: 18px; }
.mt20 { margin-top: 20px; } .mt22 { margin-top: 22px; } .mt23 { margin-top: 23px; } .mt24 { margin-top: 24px; } .mt29 { margin-top: 29px; }
.check { display: flex; align-items: center; gap: 6px; height: 14px; white-space: nowrap; }
.check i { width: 14px; height: 14px; border-radius: 3.5px; background: #fff; border: 1px solid #d5d1d6; display: flex; }
.check svg { width: 12px; height: 12px; fill: none; stroke: #222; stroke-width: 2.1; }
.well { width: 40px; height: 39px; border: 1px solid #a8a8a8; background: linear-gradient(#e2e2e2, #f7f7f7); padding: 4px; }
.well div { height: 29px; border: 1px solid #767676; background: #fff; }
.well.black div { background: #000; }
.wellrow { height: 39px; }

.stimulus { left: 346px; top: 385px; width: 571px; height: 523px; background: #efebf2; }
.stim-left { width: 268px; padding-top: 19px; }
.stim-right { width: 283px; padding-top: 21px; }
.grouplabel { width: 192px; margin-top: 22px; height: 14px; line-height: 15px; font-size: 11px; }
.group { width: 203px; height: 95px; border: 1px solid #dcd8df; border-radius: 5px; background: #e6e3ea; padding: 12px 12px; }
.radio { display: flex; align-items: center; gap: 6px; height: 14px; margin: 0 0 8px -2px; }
.radio i { width: 14px; height: 14px; border-radius: 50%; background: #fff; border: 1px solid #d0ccd3; }
.radio.on i { background: radial-gradient(#222 0 2.8px, #fff 3.4px); }
.grow { display: flex; align-items: center; gap: 6px; margin-top: 9px; white-space: nowrap; }
.grow .input { width: 50px; }
.input.off { background: #f0edf2; color: #b5b2b7; }
.dots, .fix { align-self: flex-start; margin-left: 20px; }
.dots { width: 102px; margin-top: 34px; margin-bottom: 1px; } .fix { width: 94px; margin-top: 17px; margin-bottom: 1px; }

.dotswin { left: 969px; top: 388px; width: 496px; height: 291px; background: #f4eef2; }
.dotswin .titlebar { background: #ebe6ea; }
.dots-left { width: 223px; padding-top: 20px; }
.dots-right { width: 253px; padding-top: 20px; }
.dotswin .input, .fixwin .input { width: 75px; }
.anti { margin: 12px 3px 0 0; }
.version { align-self: flex-start; margin: 44px 0 0 20px; line-height: 16px; font-size: 11px; }
.life { font-size: 11px; line-height: 16px; margin-top: 12px; }
.seed { margin-top: 9px; }
.dotswin .seed .input { width: 117px; }

.fixwin { left: 969px; top: 709px; width: 472px; height: 199px; background: #f2ebf2; }
.fixwin .titlebar { background: #ebe4eb; }
.fix-left { width: 224px; padding-top: 20px; }
.fix-right { width: 228px; padding-top: 18px; }
.shape { width: 95px; }

.monitor { left: 1593px; top: 49px; width: 322px; height: 641px; background: #f4eef1; }
.monitor .titlebar { background: #ede7ea; }
.monitor-body { padding: 18px 20px; }
.monitor .row > span { margin-top: -2px; }
.monitor .wgap { gap: 17px; }
.mk { width: 101px; } .eye { width: 112px; }
.checks { display: grid; grid-template-columns: 136px auto; row-gap: 8px; margin-top: 23px; }
.shift { margin-left: 1px; }
.reward { width: 120px; margin-top: 21px; }

/* dock */
.dock {
  position: absolute; left: 212px; top: 996px; width: 1496px; height: 79px; border-radius: 22px; padding: 10px;
  border: 1px solid rgba(255,255,255,.3); display: flex; gap: 16px;
  background: linear-gradient(90deg, #8069da 0, #746ae2 12%, #6f6ce0 30%, #8470f4 40%, #866ef6 58%, #9d6bf4 63%, #b768f5 68%, #b968f4 90%, #ac6bf2 100%);
}
.icon { position: relative; width: 52px; height: 52px; flex: none; filter: drop-shadow(0 1px 1px rgba(0,0,0,.3)); }
.icon svg { display: block; width: 52px; height: 52px; overflow: visible; position: relative; }
.icon svg.big { width: 64px; height: 64px; margin: -6px; }
.icon.running::after { content: ""; position: absolute; left: 24px; top: 62px; width: 4px; height: 4px; border-radius: 50%; background: #14005c; }
.sep { width: 1px; height: 59px; margin: -1px 7px 0; background: rgba(70,20,140,.5); }
.ticker { position: absolute; left: 5px; top: 11px; width: 40px; height: 31px; overflow: hidden; display: flex; flex-direction: column; font-size: 10.3px; font-weight: 600; line-height: 15px; color: #fbc02d; white-space: nowrap; }
.ticker span:first-child { padding-left: 2px; letter-spacing: -.2px; }
.rainbow { position: absolute; inset: 0; border-radius: 12px; background: conic-gradient(#e83e7c, #b85f9b, #20a6b4, #15bfc5, #7ccc52, #c5d53c, #f3c139, #f38c3a, #e83e7c); }
.calendar { border-radius: 12px; background: #f7f7f7; overflow: hidden; text-align: center; }
.month { height: 16px; background: #f9453f; color: #fff; font-size: 9.500px; line-height: 18px; font-weight: 700; }
.day { font-size: 31px; line-height: 33px; font-weight: 300; letter-spacing: -1px; color: #222; }
```
